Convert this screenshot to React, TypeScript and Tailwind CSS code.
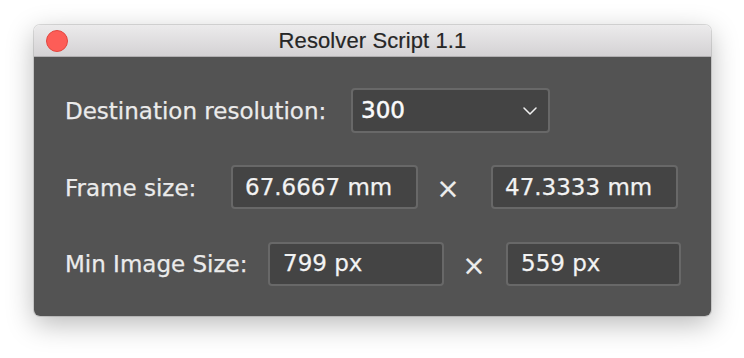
import React from "react";

const font = { fontFamily: '"DejaVu Sans", "Liberation Sans", sans-serif' };

function Field({ value, width, pad = "pl-3" }: { value: string; width: string; pad?: string }) {
  return (
    <div
      className={`${width} h-[44px] shrink-0 flex items-center ${pad} rounded-[4px] border-2 border-[#686868] bg-[#444444] text-[23px] text-[#f4f4f4]`}
    >
      {value}
    </div>
  );
}

function Times({ className }: { className: string }) {
  return (
    <span className={`w-[24px] shrink-0 text-center text-[28px] leading-none text-[#ececec] [-webkit-text-stroke:0.1px_#ececec] ${className}`}>
      ×
    </span>
  );
}

export default function App() {
  return (
    <div className="w-[744px] h-[358px] bg-white pt-[25px] pl-[34px]">
      <div
        className="w-[677px] h-[291px] rounded-[6px] overflow-hidden flex flex-col shadow-[0_8px_28px_rgba(0,0,0,0.28),0_0_0_1px_rgba(0,0,0,0.12)]"
        style={font}
      >
        <div className="relative h-[32px] shrink-0 flex items-center justify-center bg-gradient-to-b from-[#ecebec] to-[#d4d2d4] border-b border-[#b1afb1]">
          <span className="absolute left-[12px] top-[5px] w-[22px] h-[22px] rounded-full bg-[#fd5d57] border border-[#e2463f]" />
          <span
            className="text-[22px] text-[#262626] tracking-[0.1px] [-webkit-text-stroke:0.2px_#262626]"
            style={{ fontFamily: '"Liberation Sans", Arial, sans-serif' }}
          >
            Resolver Script 1.1
          </span>
        </div>

        <div className="flex-1 bg-[#535353] pl-[31px] pt-[31px] flex flex-col gap-[32px] text-[#ebebeb] text-[23px] [-webkit-text-stroke:0.25px_#ebebeb]">
          <div className="flex items-center h-[45px]">
            <span className="w-[286px] shrink-0 pt-[2px]">Destination resolution:</span>
            <div className="w-[199px] h-[45px] flex items-center justify-between pl-2 pr-[11px] rounded-[4px] border-2 border-[#686868] bg-[#444444] text-[#fafafa] [-webkit-text-stroke:0.5px_#fafafa]">
              <span>300</span>
              <svg width="14" height="8" viewBox="0 0 14 8" fill="none">
                <polyline points="1,1 7,7 13,1" stroke="#f0f0f0" strokeWidth="1.5" strokeLinecap="round" strokeLinejoin="round" />
              </svg>
            </div>
          </div>

          <div className="flex items-center h-[44px]">
            <span className="w-[166px] shrink-0 pt-[2px]">Frame size:</span>
            <Field value="67.6667 mm" width="w-[187px]" />
            <Times className="ml-[18px] mr-[31px] pt-[4px]" />
            <Field value="47.3333 mm" width="w-[187px]" />
          </div>

          <div className="flex items-center h-[45px]">
            <span className="w-[203px] shrink-0 pt-[2px]">Min Image Size:</span>
            <Field value="799 px" width="w-[176px]" pad="pl-[13px]" />
            <Times className="ml-[18px] mr-[20px] pt-[4px]" />
            <Field value="559 px" width="w-[175px]" pad="pl-[13px]" />
          </div>
        </div>
      </div>
    </div>
  );
}
